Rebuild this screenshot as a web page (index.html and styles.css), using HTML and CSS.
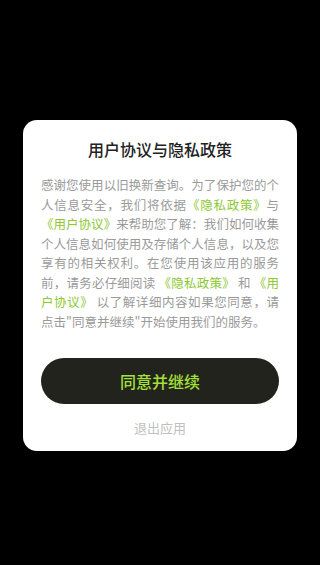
FILE: index.html
```html
<!DOCTYPE html>
<html lang="zh-CN">
<head>
    <meta charset="UTF-8">
    <meta name="viewport" content="width=device-width, initial-scale=1.0">
    <title>用户协议与隐私政策</title>
    <link rel="stylesheet" href="styles.css">
</head>
<body>
    <div class="mask">
        <div class="dialog">
            <h3 class="dialog-title">用户协议与隐私政策</h3>
            <p class="dialog-text">感谢您使用以旧换新查询。为了保护您的个人信息安全，我们将依据<a class="link">《隐私政策》</a>与<a class="link">《用户协议》</a>来帮助您了解：我们如何收集个人信息如何使用及存储个人信息，以及您享有的相关权利。在您使用该应用的服务前，请务必仔细阅读 <a class="link">《隐私政策》</a> 和 <a class="link">《用户协议》</a> 以了解详细内容如果您同意，请点击"同意并继续"开始使用我们的服务。</p>
            <button class="agree-btn">同意并继续</button>
            <div class="exit-btn">退出应用</div>
        </div>
    </div>
</body>
</html>
```

FILE: styles.css
```css
* {
    box-sizing: border-box;
    margin: 0;
    padding: 0;
}

body {
    background: #000;
    font-family: "Noto Sans CJK SC", "Noto Sans", sans-serif;
    width: 320px;
    height: 565px;
    overflow: hidden;
}

.mask {
    padding: 120px 23px 0;
}

.dialog {
    background: #fff;
    border-radius: 14px;
    padding: 18px 18px 13px;
}

.dialog-title {
    font-size: 16px;
    font-weight: 500;
    line-height: 22px;
    text-align: center;
    color: #222;
}

.dialog-text {
    margin-top: 15px;
    font-size: 12.5px;
    line-height: 19.5px;
    color: #9a9a9a;
    text-align: justify;
}

.link {
    color: #8cc832;
}

.agree-btn {
    display: block;
    width: 100%;
    height: 46px;
    margin-top: 27px;
    background: #23231d;
    color: #a3e03a;
    border: none;
    border-radius: 23px;
    font-family: inherit;
    font-size: 16px;
    font-weight: 500;
}

.exit-btn {
    margin-top: 14px;
    line-height: 20px;
    font-size: 13px;
    color: #c0c0c0;
    text-align: center;
}
```
